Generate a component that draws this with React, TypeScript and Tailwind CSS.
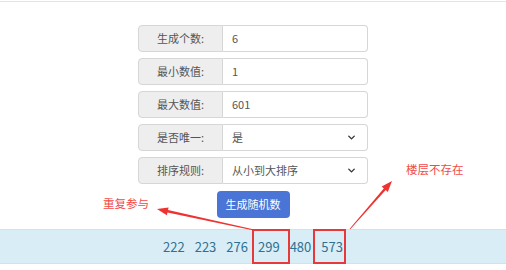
import { ChevronDown } from "lucide-react";

type Pt = [number, number];

// tapered annotation arrow: thin at the tail, thick near the head
function arrowPoints(tail: Pt, tip: Pt, w0: number, w1: number, headLen: number, headW: number) {
  const dx = tip[0] - tail[0];
  const dy = tip[1] - tail[1];
  const len = Math.hypot(dx, dy);
  const ux = dx / len;
  const uy = dy / len;
  const nx = -uy;
  const ny = ux;
  const bx = tip[0] - ux * headLen;
  const by = tip[1] - uy * headLen;
  const pts: Pt[] = [
    [tail[0] + (nx * w0) / 2, tail[1] + (ny * w0) / 2],
    [bx + (nx * w1) / 2, by + (ny * w1) / 2],
    [bx + (nx * headW) / 2, by + (ny * headW) / 2],
    tip,
    [bx - (nx * headW) / 2, by - (ny * headW) / 2],
    [bx - (nx * w1) / 2, by - (ny * w1) / 2],
    [tail[0] - (nx * w0) / 2, tail[1] - (ny * w0) / 2],
  ];
  return pts.map((p) => `${p[0].toFixed(1)},${p[1].toFixed(1)}`).join(" ");
}

const rows = [
  { label: "生成个数:", value: "6" },
  { label: "最小数值:", value: "1" },
  { label: "最大数值:", value: "601" },
  { label: "是否唯一:", value: "是", select: true },
  { label: "排序规则:", value: "从小到大排序", select: true },
];

const numbers = ["222", "223", "276", "299", "480", "573"];

export default function App() {
  return (
    <div
      className="relative w-[506px] h-[270px] bg-white overflow-hidden"
      style={{ fontFamily: '"Noto Sans CJK SC", "Noto Sans", sans-serif' }}
    >
      <div className="mt-px h-px bg-[#e3e3e3]" />

      {/* form */}
      <div className="mx-auto mt-[23px] w-[230px] flex flex-col gap-[6px]">
        {rows.map((row) => (
          <div key={row.label} className="flex h-[27px] text-[11px] text-[#555]">
            <div className="w-[85px] shrink-0 flex items-center justify-center bg-[#eeeeee] border border-[#d6d6d6] rounded-l-[4px]">
              {row.label}
            </div>
            <div className="flex-1 flex items-center justify-between pl-[9px] pr-[10px] bg-white border border-l-0 border-[#d6d6d6] rounded-r-[4px]">
              <span>{row.value}</span>
              {row.select && (
                <ChevronDown className="w-[11px] h-[11px] text-[#333]" strokeWidth={3} />
              )}
            </div>
          </div>
        ))}
      </div>

      <div className="mt-[7px] flex justify-center">
        <button className="w-[73px] h-[27px] rounded-[4px] bg-[#4a75d7] text-white text-[11px]">
          生成随机数
        </button>
      </div>

      {/* result */}
      <div className="mt-[11px] h-[35px] flex items-center justify-center bg-[#d9edf7] border-y border-[#c8e6f2] text-[13px] text-[#31708f]">
        {numbers.map((n) => (
          <span key={n} className="mx-[5px]">
            {n}
          </span>
        ))}
      </div>

      {/* annotations */}
      <div className="absolute left-[103px] top-[195px] text-[11.5px] text-[#f24a4a]">重复参与</div>
      <div className="absolute left-[406px] top-[161px] text-[11.5px] text-[#f24a4a]">楼层不存在</div>
      <svg className="absolute inset-0 pointer-events-none" width={506} height={270}>
        <rect x={253} y={230} width={36} height={33} fill="none" stroke="#e8393a" strokeWidth={2} />
        <rect x={314} y={230} width={31} height={33} fill="none" stroke="#e8393a" strokeWidth={2} />
        <polygon points={arrowPoints([254, 230], [157, 209], 0.8, 2.6, 11, 8)} fill="#ee3330" />
        <polygon points={arrowPoints([350, 229], [392, 181], 0.8, 2.6, 11, 8)} fill="#ee3330" />
      </svg>
    </div>
  );
}
